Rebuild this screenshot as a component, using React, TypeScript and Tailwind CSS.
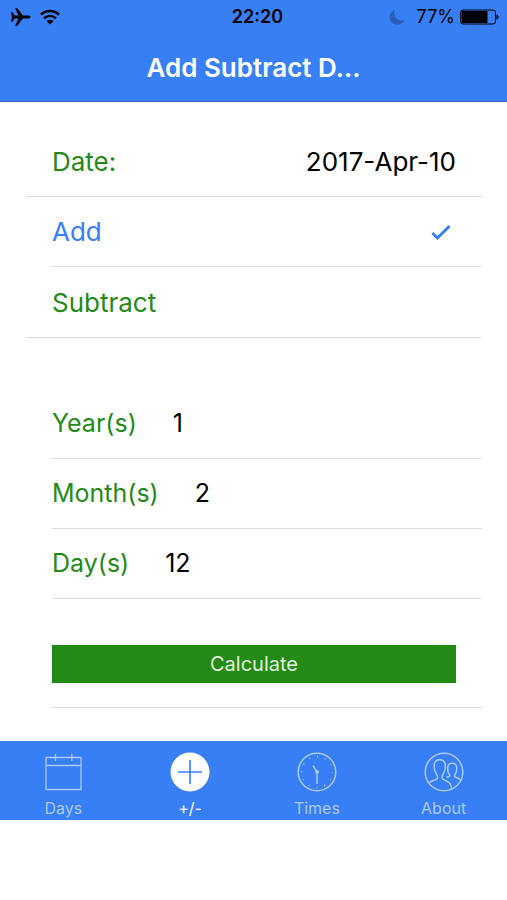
import { FormEvent, useState } from 'react';
import type { ComponentType } from 'react';

type Mode = 'add' | 'subtract';

interface AmountRowProps {
  id: string;
  label: string;
  value: string;
  onChange: (value: string) => void;
}

interface Tab {
  name: string;
  icon: ComponentType;
}

function StatusBar() {
  return (
    <div className="grid h-[34px] grid-cols-3 items-center px-2 text-lg text-black">
      <div className="flex items-center gap-2">
        <svg className="h-5 w-6" viewBox="0 0 24 20" fill="currentColor">
          <path d="M3 5.2h1.6L6.6 8.400h4L7.100 1.200h2.200l5.600 7.200h5.200c1.300 0 2.400.7 2.400 1.600s-1.100 1.600-2.400 1.600h-5.200l-5.600 7.200H7.100l3.500-7.200h-4l-2 3.200H3L4 10z" />
        </svg>
        <svg className="h-5 w-5" viewBox="0 0 20 20" fill="none" stroke="currentColor" strokeWidth="2.4">
          <path d="M.9 7.700a13 13 0 0 1 18.200 0" />
          <path d="M4.100 11.300a8.400 8.400 0 0 1 11.800 0" />
          <path d="M10 17.400 6.500 14.100a4.900 4.900 0 0 1 7 0z" fill="currentColor" stroke="none" />
        </svg>
      </div>
      <span className="pl-2 text-center font-semibold">22:20</span>
      <div className="flex items-center justify-end gap-1">
        <svg className="mr-2 h-4 w-4 shrink-0 text-[#285eb8]" viewBox="0 0 16 16" fill="currentColor">
          <path d="M5.500.8A7.700 7.700 0 1 0 15.300 11.300C9.500 13 3.800 7.500 5.500.8z" />
        </svg>
        <span>77%</span>
        <svg className="h-4 w-10 shrink-0" viewBox="0 0 40 16" fill="currentColor">
          <rect x="1.500" y="1" width="35" height="14" rx="2.500" fill="none" stroke="currentColor" />
          <rect x="2.500" y="2" width="26" height="12" rx="1" />
          <path d="M37.500 5.300c1.400.6 2 1.500 2 2.700s-.6 2.100-2 2.700z" />
        </svg>
      </div>
    </div>
  );
}

function AmountRow({ id, label, value, onChange }: AmountRowProps) {
  return (
    <div className="ml-[26px] flex h-[70px] items-center gap-9 border-b border-[#dcdcde] text-[25px]">
      <label htmlFor={id} className="text-[#238a16]">
        {label}
      </label>
      <input
        id={id}
        type="text"
        inputMode="numeric"
        value={value}
        onChange={(e) => onChange(e.target.value)}
        className="min-w-0 flex-1 bg-transparent text-black focus:outline-none"
      />
    </div>
  );
}

function DaysIcon() {
  return (
    <svg className="h-10 w-10" viewBox="0 0 40 40" fill="none" stroke="currentColor" strokeWidth="1.3">
      <path d="M3 5.500h35v32H3zM3 13.500h35M12.500 2v7M28.800 2v7" />
    </svg>
  );
}

function PlusIcon() {
  return (
    <svg className="h-10 w-10" viewBox="0 0 40 40">
      <circle cx="20" cy="20" r="19.500" fill="currentColor" />
      <path d="M8 20h24M20 8v24" stroke="#387ef5" strokeWidth="1.6" />
    </svg>
  );
}

function TimesIcon() {
  return (
    <svg className="h-10 w-10" viewBox="0 0 40 40" fill="none" stroke="currentColor" strokeWidth="1.5">
      <circle cx="20" cy="20" r="18.800" />
      <circle cx="20" cy="20" r="15.500" strokeWidth="1.500" strokeDasharray="1 7.116" strokeDashoffset=".5" />
      <path d="M16 13.500 20 20v12" />
      <circle cx="20" cy="20" r="1.200" fill="currentColor" />
    </svg>
  );
}

function AboutIcon() {
  return (
    <svg className="h-10 w-10" viewBox="0 0 40 40" fill="none" stroke="currentColor" strokeWidth="1.5" strokeLinejoin="round">
      <circle cx="20" cy="20" r="18.800" />
      <path d="M5.500 30.500c1.800-2.200 7.500-2 8-4.300.3-1.700-.3-3.200-1.500-5-1.500-2.200-1.900-4.700-1.800-7.500.2-3.900 2.200-6 5.600-6s5.400 2.100 5.600 6c.1 2.800-.3 5.300-1.800 7.500-1.200 1.800-1.800 3.300-1.500 5 .5 3 9.900 1.500 9.400 11.300" />
      <path d="M22.500 25c1.900-.1 3-.7 3.300-1.800-1.700-2.200-2.300-4.400-2.200-7 .1-3 1.800-4.900 4.600-4.900s4.500 1.900 4.600 4.900c.1 2.600-.5 4.800-2.200 7-.6 3.100 3.600 2.200 5.700 4.300" />
    </svg>
  );
}

function CheckMark() {
  return (
    <svg className="h-5 w-5" viewBox="0 0 20 20" fill="none" stroke="currentColor" strokeWidth="3">
      <path d="M1.500 11 6.500 16 18.500 4" />
    </svg>
  );
}

const tabs: Tab[] = [
  { name: 'Days', icon: DaysIcon },
  { name: '+/-', icon: PlusIcon },
  { name: 'Times', icon: TimesIcon },
  { name: 'About', icon: AboutIcon },
];

export default function App() {
  const [mode, setMode] = useState<Mode>('add');
  const [years, setYears] = useState('1');
  const [months, setMonths] = useState('2');
  const [days, setDays] = useState('12');
  const [activeTab, setActiveTab] = useState('+/-');

  const handleSubmit = (e: FormEvent) => {
    e.preventDefault();
  };

  return (
    <div className="min-h-screen bg-white font-['Inter',sans-serif]">
      <header className="border-b border-[#3769c0] bg-[#387ef5]">
        <StatusBar />
        <h1 className="flex h-[67px] items-center justify-center text-[26px] font-semibold text-white">
          Add Subtract D...
        </h1>
      </header>

      <form onSubmit={handleSubmit} className="pt-[25px] pr-[25px] pl-[26px] text-[26px]">
        <div className="flex h-[70px] items-center justify-between border-b border-[#dcdcde] px-[26px]">
          <span className="text-[#238a16]">Date:</span>
          <button type="button" className="text-black">
            2017-Apr-10
          </button>
        </div>

        <div className="border-b border-[#dcdcde] pl-[26px]">
          <button
            type="button"
            aria-pressed={mode === 'add'}
            onClick={() => setMode('add')}
            className={`flex h-[70px] w-full items-center justify-between border-b border-[#dcdcde] pr-[31px] ${mode === 'add' ? 'text-[#387ef5]' : 'text-[#238a16]'}`}
          >
            Add
            {mode === 'add' && <CheckMark />}
          </button>
          <button
            type="button"
            aria-pressed={mode === 'subtract'}
            onClick={() => setMode('subtract')}
            className={`flex h-[70px] w-full items-center justify-between pr-[31px] ${mode === 'subtract' ? 'text-[#387ef5]' : 'text-[#238a16]'}`}
          >
            Subtract
            {mode === 'subtract' && <CheckMark />}
          </button>
        </div>

        <div className="mt-[51px]">
          <AmountRow id="years" label="Year(s)" value={years} onChange={setYears} />
          <AmountRow id="months" label="Month(s)" value={months} onChange={setMonths} />
          <AmountRow id="days" label="Day(s)" value={days} onChange={setDays} />
        </div>

        <div className="ml-[26px] border-b border-[#dcdcde] pt-[46px] pr-[26px] pb-6">
          <button type="submit" className="block h-[38px] w-full bg-[#238a16] text-xl text-[#e2f5df]">
            Calculate
          </button>
        </div>
      </form>

      <nav className="mt-[33px] grid h-[79px] grid-cols-4 bg-[#387ef5]">
        {tabs.map(({ name, icon: Icon }) => (
          <button
            key={name}
            type="button"
            onClick={() => setActiveTab(name)}
            className={`flex flex-col items-center gap-1 pt-[11px] text-base ${activeTab === name ? 'text-white' : 'text-[#a9cbfd]'}`}
          >
            <Icon />
            {name}
          </button>
        ))}
      </nav>
    </div>
  );
}
